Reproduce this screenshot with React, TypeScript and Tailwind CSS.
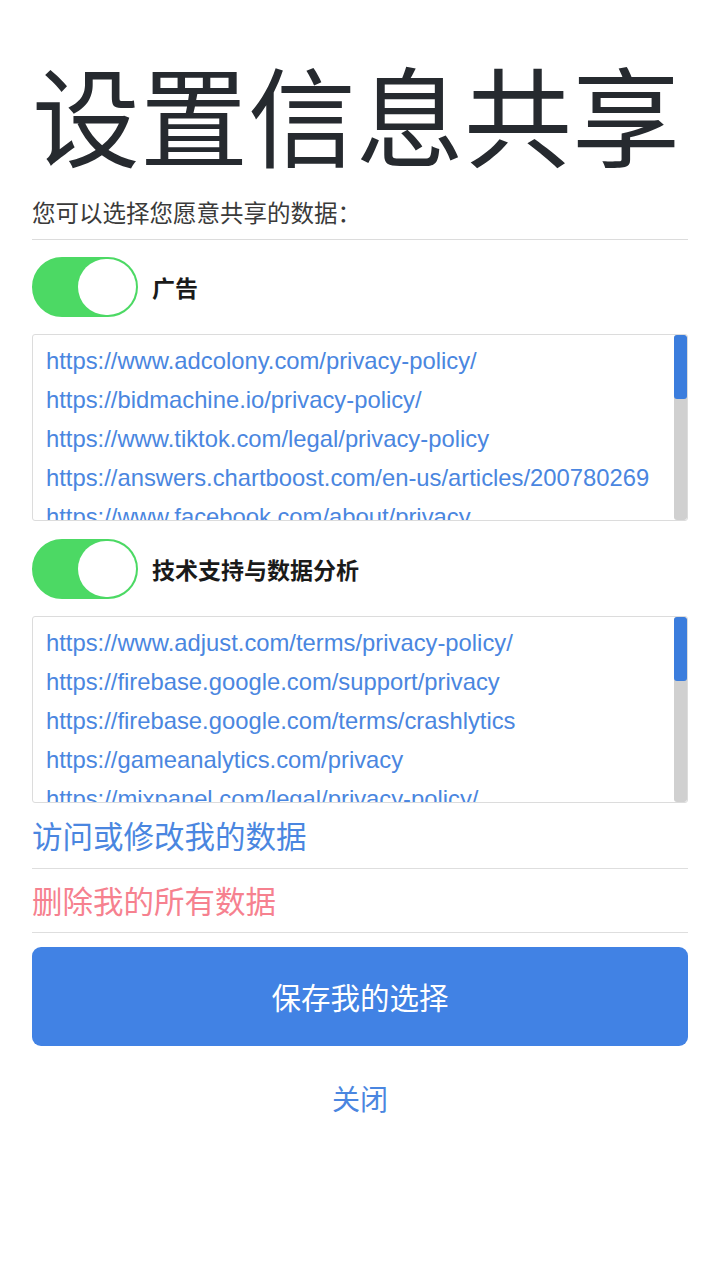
import { useState } from 'react';

const adLinks = [
  'https://www.adcolony.com/privacy-policy/',
  'https://bidmachine.io/privacy-policy/',
  'https://www.tiktok.com/legal/privacy-policy',
  'https://answers.chartboost.com/en-us/articles/200780269',
  'https://www.facebook.com/about/privacy',
];

const analyticsLinks = [
  'https://www.adjust.com/terms/privacy-policy/',
  'https://firebase.google.com/support/privacy',
  'https://firebase.google.com/terms/crashlytics',
  'https://gameanalytics.com/privacy',
  'https://mixpanel.com/legal/privacy-policy/',
];

const cjk = "font-['Noto_Sans_CJK_SC','Noto_Sans',sans-serif]";

function Toggle({ on, onClick }: { on: boolean; onClick: () => void }) {
  return (
    <button
      onClick={onClick}
      className={`flex h-[60px] w-[106px] shrink-0 items-center rounded-full border-2 p-0 ${
        on ? 'justify-end border-[#4cd964] bg-[#4cd964]' : 'justify-start border-[#e5e5e5] bg-white'
      }`}
    >
      <span className="h-[56px] w-[58px] rounded-full bg-white" />
    </button>
  );
}

function LinkBox({ links }: { links: string[] }) {
  return (
    <div className="flex h-[187px] overflow-hidden rounded-[3px] border border-[#dcdcdc] bg-white">
      <div className="flex-1 overflow-hidden pl-[13px] pt-[6px]">
        {links.map((l) => (
          <div
            key={l}
            className="h-[39px] whitespace-nowrap text-[23.8px] leading-[39px] text-[#4a86e0] font-['Liberation_Sans',Arial,sans-serif]"
          >
            {l}
          </div>
        ))}
      </div>
      <div className="flex w-[13px] flex-col rounded-[3px] bg-[#d0d0d0]">
        <div className="h-[64px] rounded-[3px] bg-[#3b7ddd]" />
      </div>
    </div>
  );
}

function Section({ label, links }: { label: string; links: string[] }) {
  const [on, setOn] = useState(true);
  return (
    <div className="flex flex-col">
      <div className="flex items-center gap-[14px]">
        <Toggle on={on} onClick={() => setOn(!on)} />
        <span className="text-[23px] font-bold text-[#1a1a1a]">{label}</span>
      </div>
      <div className="mt-[17px]">
        <LinkBox links={links} />
      </div>
    </div>
  );
}

export default function App() {
  return (
    <div className={`min-h-[1280px] bg-white px-[32px] ${cjk}`}>
      <h1 className="pt-[50px] text-[108px] leading-[124px] font-normal text-[#262a2f] whitespace-nowrap">
        设置信息共享
      </h1>
      <p className="mt-[22px] text-[23.5px] leading-[32px] text-[#3a3a3a]">您可以选择您愿意共享的数据：</p>
      <div className="mt-[11px] h-px bg-[#dcdcdc]" />

      <div className="mt-[17px] flex flex-col gap-[18px]">
        <Section label="广告" links={adLinks} />
        <Section label="技术支持与数据分析" links={analyticsLinks} />
      </div>

      <div className="flex flex-col">
        <div className="flex h-[66px] items-center border-b border-[#dedede] text-[30.5px] text-[#4a86e0]">
          访问或修改我的数据
        </div>
        <div className="flex h-[64px] items-center border-b border-[#dedede] text-[30.5px] text-[#f6818f]">
          删除我的所有数据
        </div>
      </div>

      <button className="mt-[14px] flex h-[99px] w-full items-center justify-center rounded-[9px] bg-[#4182e4] text-[29.5px] text-white">
        保存我的选择
      </button>

      <div className="mt-[28px] flex justify-center">
        <button className="text-[28px] leading-[48px] text-[#4a86e0]">关闭</button>
      </div>
    </div>
  );
}
